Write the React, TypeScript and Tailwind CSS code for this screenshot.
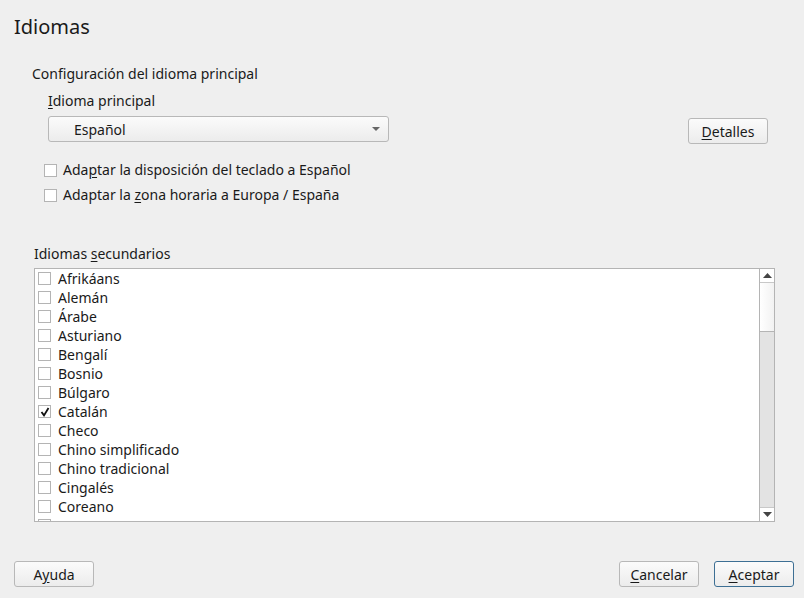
import React from "react";

const langs: [string, boolean][] = [
  ["Afrikáans", false],
  ["Alemán", false],
  ["Árabe", false],
  ["Asturiano", false],
  ["Bengalí", false],
  ["Bosnio", false],
  ["Búlgaro", false],
  ["Catalán", true],
  ["Checo", false],
  ["Chino simplificado", false],
  ["Chino tradicional", false],
  ["Cingalés", false],
  ["Coreano", false],
  ["Croata", false],
];

function Box({ checked, className = "" }: { checked?: boolean; className?: string }) {
  return (
    <span
      className={
        "relative inline-block w-[13px] h-[13px] border border-[#b4b4b4] bg-white shrink-0 " + className
      }
    >
      {checked && (
        <svg className="absolute left-[1px] top-[1px]" width="10" height="10" viewBox="0 0 10 10">
          <path d="M1.5 5 L4 8.4 L8.5 1" stroke="#111" strokeWidth="1.8" fill="none" />
        </svg>
      )}
    </span>
  );
}

function Btn({ children, className = "", primary = false }: { children: React.ReactNode; className?: string; primary?: boolean }) {
  return (
    <div
      className={
        "h-[26px] w-[80px] flex items-center justify-center rounded-[3px] border text-[14px] text-[#1a1a1a] bg-gradient-to-b from-[#fbfbfb] to-[#ececec] " +
        (primary ? "border-[#3d6f94]" : "border-[#b8b8b8]") +
        " " +
        className
      }
    >
      {children}
    </div>
  );
}

export default function App() {
  return (
    <div
      className="w-[804px] h-[598px] bg-[#efefef] text-[#1a1a1a] relative overflow-hidden"
      style={{ fontFamily: '"Noto Sans", sans-serif' }}
    >
      <div className="absolute left-[14px] top-[13px] text-[20px] leading-[28px]">Idiomas</div>

      <div className="absolute left-[32px] top-[64px] text-[14px] leading-[20px]">
        Configuración del idioma principal
      </div>
      <div className="absolute left-[48px] top-[91px] text-[14px] leading-[20px]">
        <u className="underline-offset-2">I</u>dioma principal
      </div>

      <div className="absolute left-[48px] top-[116px] w-[341px] h-[26px] rounded-[3px] border border-[#b8b8b8] bg-gradient-to-b from-[#fbfbfb] to-[#ececec] flex items-center">
        <span className="ml-[25px] text-[14px]">Español</span>
        <svg className="absolute right-[8px] top-[10px]" width="8" height="4" viewBox="0 0 8 4">
          <path d="M0 0 H8 L4 4 Z" fill="#666" />
        </svg>
      </div>

      <Btn className="absolute left-[688px] top-[118px]">
        <span>
          <u className="underline-offset-2">D</u>etalles
        </span>
      </Btn>

      <div className="absolute left-[44px] top-[160px] flex items-center gap-[6px] text-[14px] leading-[20px]">
        <Box />
        <span>
          Ada<u className="underline-offset-2">p</u>tar la disposición del teclado a Español
        </span>
      </div>
      <div className="absolute left-[44px] top-[185px] flex items-center gap-[6px] text-[14px] leading-[20px]">
        <Box />
        <span>
          Adaptar la <u className="underline-offset-2">z</u>ona horaria a Europa / España
        </span>
      </div>

      <div className="absolute left-[34px] top-[244px] text-[14px] leading-[20px]">
        Idiomas <u className="underline-offset-2">s</u>ecundarios
      </div>

      <div className="absolute left-[34px] top-[268px] w-[741px] h-[254px] border border-[#b4b4b4] bg-white flex">
        <div className="flex-1 overflow-hidden">
          {langs.map(([name, c]) => (
            <div key={name} className="h-[19px] flex items-center pl-[3px] text-[14px]">
              <Box checked={c} />
              <span className="ml-[7px]">{name}</span>
            </div>
          ))}
        </div>
        <div className="w-[15px] border-l border-[#b4b4b4] bg-[#e3e3e3] flex flex-col">
          <div className="h-[14px] bg-white border-b border-[#c8c8c8] flex items-center justify-center">
            <svg width="9" height="5" viewBox="0 0 9 5">
              <path d="M0 5 H9 L4.5 0 Z" fill="#444" />
            </svg>
          </div>
          <div className="h-[49px] bg-gradient-to-r from-white to-[#f2f2f2] border-b border-[#b4b4b4]" />
          <div className="flex-1" />
          <div className="h-[14px] bg-white border-t border-[#c8c8c8] flex items-center justify-center">
            <svg width="9" height="5" viewBox="0 0 9 5">
              <path d="M0 0 H9 L4.5 5 Z" fill="#444" />
            </svg>
          </div>
        </div>
      </div>

      <Btn className="absolute left-[14px] top-[561px]">
        <span>
          A<u className="underline-offset-2">y</u>uda
        </span>
      </Btn>
      <Btn className="absolute left-[619px] top-[561px]">
        <span>
          <u className="underline-offset-2">C</u>ancelar
        </span>
      </Btn>
      <Btn primary className="absolute left-[714px] top-[561px]">
        <span>
          <u className="underline-offset-2">A</u>ceptar
        </span>
      </Btn>
    </div>
  );
}
